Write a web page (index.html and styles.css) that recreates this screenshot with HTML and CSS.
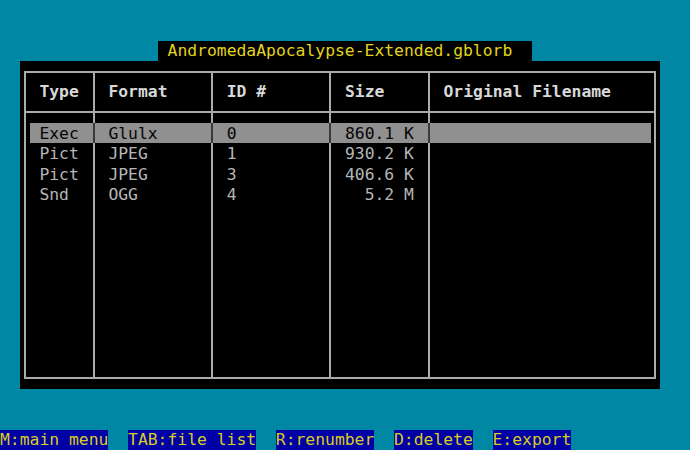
FILE: index.html
```html
<!DOCTYPE html>
<html>
<head>
<meta charset="utf-8">
<link rel="stylesheet" href="styles.css">
</head>
<body>
<div class="screen">
  <div class="title">AndromedaApocalypse-Extended.gblorb</div>
  <div class="box">
    <div class="frame">
      <div class="col first">
        <div class="hd">Type</div>
        <div class="rows">
          <div class="cell sel">Exec</div>
          <div class="cell">Pict</div>
          <div class="cell">Pict</div>
          <div class="cell">Snd</div>
        </div>
      </div>
      <div class="col">
        <div class="hd">Format</div>
        <div class="rows">
          <div class="cell sel">Glulx</div>
          <div class="cell">JPEG</div>
          <div class="cell">JPEG</div>
          <div class="cell">OGG</div>
        </div>
      </div>
      <div class="col">
        <div class="hd">ID #</div>
        <div class="rows">
          <div class="cell sel">0</div>
          <div class="cell">1</div>
          <div class="cell">3</div>
          <div class="cell">4</div>
        </div>
      </div>
      <div class="col">
        <div class="hd">Size</div>
        <div class="rows">
          <div class="cell sel">860.1 K</div>
          <div class="cell">930.2 K</div>
          <div class="cell">406.6 K</div>
          <div class="cell">  5.2 M</div>
        </div>
      </div>
      <div class="col last">
        <div class="hd">Original Filename</div>
        <div class="rows">
          <div class="cell sel"></div>
        </div>
      </div>
    </div>
  </div>
  <div class="keys">
    <span class="key">M:main menu</span>
    <span class="key">TAB:file list</span>
    <span class="key">R:renumber</span>
    <span class="key">D:delete</span>
    <span class="key">E:export</span>
  </div>
</div>
</body>
</html>
```
FILE: styles.css
```css
:root {
  --cw: 9.857px;
  --rh: 20.4545px;
  --line: #ababab;
}
html, body {
  margin: 0;
  padding: 0;
}
body {
  background: #0087a3;
  font-family: "DejaVu Sans Mono", monospace;
  font-size: 16.37px;
  line-height: var(--rh);
  width: 690px;
  height: 450px;
  overflow: hidden;
}
.screen {
  display: flex;
  flex-direction: column;
  height: 450px;
  padding-top: calc(2 * var(--rh));
  box-sizing: border-box;
}
.title {
  align-self: flex-start;
  margin-left: calc(16 * var(--cw));
  width: calc(38 * var(--cw));
  padding-left: var(--cw);
  box-sizing: border-box;
  height: var(--rh);
  background: #000;
  color: #e2d31c;
  white-space: pre;
}
.box {
  margin-left: calc(2 * var(--cw));
  width: calc(65 * var(--cw));
  height: calc(16 * var(--rh));
  background: #000;
  box-sizing: border-box;
  padding: calc(var(--rh) / 2 - 1px) calc(var(--cw) / 2 - 1px);
}
.frame {
  height: calc(15 * var(--rh) + 2px);
  border: 2px solid var(--line);
  box-sizing: border-box;
  display: grid;
  grid-template-columns: calc(7 * var(--cw)) calc(12 * var(--cw)) calc(12 * var(--cw)) calc(10 * var(--cw)) 1fr;
}
.col {
  border-right: 2px solid var(--line);
  display: flex;
  flex-direction: column;
  min-width: 0;
}
.col.last {
  border-right: 0;
}
.hd {
  height: calc(2 * var(--rh));
  box-sizing: border-box;
  border-bottom: 2px solid var(--line);
  padding-top: calc(var(--rh) / 2 - 1px);
  padding-left: calc(1.5 * var(--cw) - 1px);
  font-weight: bold;
  color: #d8d8d8;
  white-space: pre;
}
.rows {
  padding-top: calc(var(--rh) / 2 - 1px);
}
.cell {
  height: var(--rh);
  box-sizing: border-box;
  padding-left: calc(1.5 * var(--cw) - 1px);
  padding-top: 1px;
  color: #b6b6b6;
  white-space: pre;
  line-height: calc(var(--rh) - 1px);
}
.cell.sel {
  background: #909090;
  color: #050505;
  margin-left: -2px;
  border-left: 2px solid #3a3a3a;
}
.first .cell.sel {
  margin-left: calc(var(--cw) / 2 - 1px);
  border-left: 0;
  padding-left: var(--cw);
}
.last .cell.sel {
  margin-right: calc(var(--cw) / 2 - 1px);
}
.keys {
  margin-top: calc(2 * var(--rh));
  display: flex;
  gap: calc(2 * var(--cw));
  height: var(--rh);
}
.key {
  background: #0000a6;
  color: #d8cc1e;
  white-space: pre;
}
```
